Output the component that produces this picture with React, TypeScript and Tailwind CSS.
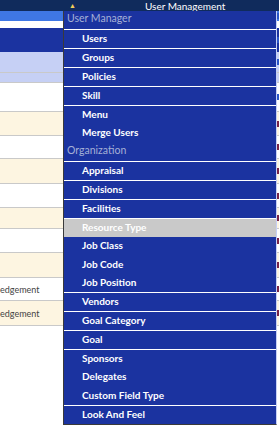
import React from "react";

type Seg = { h: string; bg: string; line?: boolean; text?: string; mark?: string };

const rows: Seg[] = [
  { h: "h-[10px]", bg: "bg-[#3f77e4]", mark: "bg-[#2a55c8]" },
  { h: "h-[7px]", bg: "bg-white" },
  { h: "h-[24px]", bg: "bg-[#1b33a0]", mark: "bg-[#2a55c8]" },
  { h: "h-[21px]", bg: "bg-[#c6d0f5]", line: true, mark: "bg-[#2a55c8]" },
  { h: "h-[10px]", bg: "bg-[#c6d0f5]", line: true },
  { h: "h-[29px]", bg: "bg-white", line: true, mark: "bg-[#2a55c8]" },
  { h: "h-[24px]", bg: "bg-[#fdf5e1]", line: true, mark: "bg-[#7a2448]" },
  { h: "h-[23px]", bg: "bg-white", line: true, mark: "bg-[#7a2448]" },
  { h: "h-[25px]", bg: "bg-[#fdf5e1]", line: true, mark: "bg-[#7a2448]" },
  { h: "h-[24px]", bg: "bg-white", line: true, mark: "bg-[#7a2448]" },
  { h: "h-[21px]", bg: "bg-[#fdf5e1]", line: true, mark: "bg-[#7a2448]" },
  { h: "h-[24px]", bg: "bg-white", line: true, mark: "bg-[#7a2448]" },
  { h: "h-[25px]", bg: "bg-[#fdf5e1]", line: true, mark: "bg-[#7a2448]" },
  { h: "h-[23px]", bg: "bg-white", line: true, text: "edgement", mark: "bg-[#7a2448]" },
  { h: "h-[25px]", bg: "bg-[#fdf5e1]", line: true, text: "edgement", mark: "bg-[#7a2448]" },
];

type Item = { label: string; header?: boolean; top?: boolean; active?: boolean; tall?: boolean };

const items: Item[] = [
  { label: "User Manager", header: true },
  { label: "Users", top: true },
  { label: "Groups", top: true },
  { label: "Policies", top: true },
  { label: "Skill", top: true },
  { label: "Menu", top: true },
  { label: "Merge Users", tall: true },
  { label: "Organization", header: true },
  { label: "Appraisal", top: true },
  { label: "Divisions", top: true },
  { label: "Facilities", top: true },
  { label: "Resource Type", top: true, active: true },
  { label: "Job Class", tall: true },
  { label: "Job Code" },
  { label: "Job Position" },
  { label: "Vendors", top: true },
  { label: "Goal Category", top: true },
  { label: "Goal", top: true },
  { label: "Sponsors", top: true },
  { label: "Delegates", tall: true },
  { label: "Custom Field Type" },
  { label: "Look And Feel", top: true },
];

export default function App() {
  return (
    <div className="relative w-[279px] h-[430px] overflow-hidden bg-white font-['Lato','Liberation_Sans',sans-serif]">
      <div className="h-[11px] bg-[#102b5c] flex items-center text-white text-[10px] leading-none">
        <span className="ml-[69px] text-[#f2cf5a] text-[7px] leading-none">▲</span>
        <span className="ml-[69px]">User Management</span>
      </div>

      <div>
        {rows.map((r, i) => (
          <div
            key={i}
            className={`${r.h} ${r.bg} ${r.line ? "border-b border-[#c9c9c9]" : ""} flex items-center justify-between`}
          >
            <span className="text-[9px] text-[#444] leading-none">{r.text}</span>
            {r.mark && <span className={`w-[2px] h-[6px] ${r.mark}`} />}
          </div>
        ))}
      </div>

      <div className="absolute left-[63px] top-[11px] w-[214px] bg-[#1b33a0] border-l border-b border-[#3a3a3a] border-r border-r-[#c6d0f5]">
        {items.map((it) => {
          const h = it.top || it.tall ? "h-[19px]" : "h-[18px]";
          return (
            <div
              key={it.label}
              className={`${h} flex items-start leading-none ${it.top ? "border-t border-white" : ""} ${
                it.header
                  ? "pt-[2px] pl-[3px] text-[10.5px] text-[#a5b0d6]"
                  : it.active
                  ? "pt-[3px] pl-[18px] text-[10px] font-bold text-white bg-[#c9c9c9]"
                  : "pt-[3px] pl-[18px] text-[10px] font-bold text-white"
              }`}
            >
              {it.label}
            </div>
          );
        })}
      </div>
    </div>
  );
}
